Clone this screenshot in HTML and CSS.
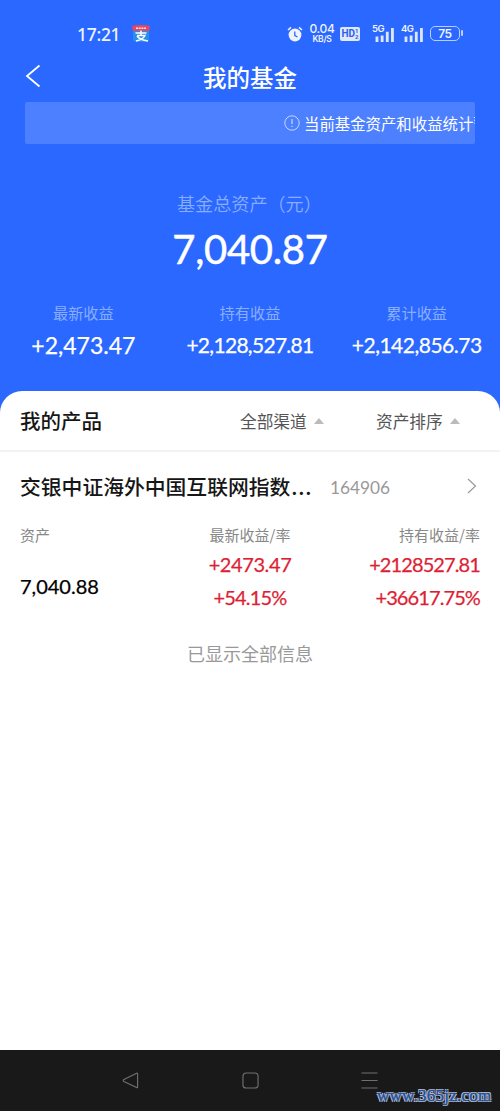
FILE: index.html
```html
<!DOCTYPE html>
<html lang="zh-CN">
<head>
<meta charset="utf-8">
<title>我的基金</title>
<link rel="stylesheet" href="styles.css">
</head>
<body>
<header class="hero">
  <div class="status">
    <span class="clock">17:21</span>
    <svg class="pay" viewBox="0 0 18 18"><path d="M1 5h16v9q0 3-3 3H4q-3 0-3-3z" fill="#268fed"/><path d="M0 1q9-2 18 0l-1 5H1z" fill="#e64862"/><path d="M4 3.2h10" stroke="#ffe6e8" stroke-width="1.6" stroke-dasharray="2 .7"/><path d="M3.500 8h11M9 5.500v5M5 10.500h8q-2 4-9 5.500M5 11q3 4 11 5" fill="none" stroke="#fff" stroke-width="1.5"/></svg>
    <svg class="alarm" viewBox="0 0 16 16"><circle cx="8" cy="9" r="6.400" fill="#eef3ff"/><path d="M1 4l3-2.600M15 4l-3-2.600" stroke="#eef3ff" stroke-width="1.500"/><path d="M7.800 5.500v4l2.700 1.500" fill="none" stroke="#2d68fb" stroke-width="1.300"/></svg>
    <span class="speed"><b>0.04</b><small>KB/S</small></span>
    <span class="hd"><b>HD</b><i>1<br>2</i></span>
    <span class="signal first"><b>5G</b><svg viewBox="0 0 22 16"><path d="M3.500 16v-6M9 16V9M14.500 16V5M20 16V1" stroke="#dce7ff" stroke-width="3"/></svg></span>
    <span class="signal"><b>4G</b><svg viewBox="0 0 22 16"><path d="M3.500 16v-6M9 16V9M14.500 16V5M20 16V1" stroke="#dce7ff" stroke-width="3"/></svg></span>
    <span class="battery">75</span>
  </div>
  <nav class="titlebar">
    <svg class="back" viewBox="0 0 16 24"><path d="M14.500 1.500L2 12l12.500 10.500" fill="none" stroke="#fff" stroke-width="1.800"/></svg>
    <h1>我的基金</h1>
  </nav>
  <div class="notice">
    <svg viewBox="0 0 16 16"><circle cx="8" cy="8" r="7.200" fill="none" stroke="#c6d6ff"/><path d="M8 4v5M8 10.800v1.300" stroke="#c6d6ff" stroke-width="1.200"/></svg>
    <span>当前基金资产和收益统计暂</span>
  </div>
  <div class="total-label">基金总资产（元）</div>
  <div class="total num">7,040.87</div>
  <div class="summary">
    <div><span>最新收益</span><strong class="num latest">+2,473.47</strong></div>
    <div><span>持有收益</span><strong class="num held">+2,128,527.81</strong></div>
    <div><span>累计收益</span><strong class="num accrued">+2,142,856.73</strong></div>
  </div>
</header>
<main class="sheet">
  <div class="toolbar">
    <h2>我的产品</h2>
    <span class="filter channel">全部渠道<i></i></span>
    <span class="filter">资产排序<i></i></span>
  </div>
  <section class="product">
    <div class="name-row">
      <h3>交银中证海外中国互联网指数<span class="dots">...</span></h3>
      <span class="code num">164906</span>
      <svg class="go" viewBox="0 0 10 16"><path d="M1 1l7.500 7L1 15" fill="none" stroke="#999" stroke-width="1.200"/></svg>
    </div>
    <div class="figures">
      <div class="asset"><span class="label">资产</span><span class="num amount">7,040.88</span></div>
      <div class="gain"><span class="label">最新收益/率</span><span class="num g1">+2473.47</span><span class="num g2">+54.15%</span></div>
      <div class="holding"><span class="label">持有收益/率</span><span class="num h1">+2128527.81</span><span class="num h2">+36617.75%</span></div>
    </div>
    <p class="end">已显示全部信息</p>
  </section>
</main>
<footer class="navbar">
  <svg viewBox="0 0 18 18"><path d="M16.500 2v14q0 1-1 .500L2 10q-1.500-1 0-2L15.500 1.300q1-.500 1 .700z"/></svg>
  <svg viewBox="0 0 18 18"><rect x="1" y="1" width="16" height="16" rx="3.500"/></svg>
  <svg viewBox="0 0 18 18"><path d="M.500 1h17M.500 9h17M.500 17h17"/></svg>
  <span class="watermark">www.365jz.com</span>
</footer>
</body>
</html>
```
FILE: styles.css
```css
* { box-sizing: border-box; }
body { margin: 0; width: 500px; height: 1111px; display: flex; flex-direction: column; overflow: hidden; background: #2a68ff; color: #161616; font-family: "Noto Sans CJK SC", sans-serif; }
h1, h2, h3, p { margin: 0; font-weight: 500; }
svg { display: block; flex: none; }
.num { font-family: Lato, sans-serif; font-weight: 400; -webkit-text-stroke: .25px currentColor; white-space: nowrap; }
.hero { height: 391px; color: #fff; }
.status { height: 52px; padding: 15px 0 0 77px; display: flex; align-items: center; font-family: Roboto, sans-serif; color: #eef3ff; }
.clock { width: 55px; font: 500 17.500px/24px "Noto Sans", sans-serif; letter-spacing: -.3px; }
.pay { width: 18px; height: 18px; }
.alarm { width: 16px; height: 16px; margin-left: 137px; }
.speed { width: 26px; margin-left: 6px; display: flex; flex-direction: column; align-items: center; }
.speed b { font: 500 12px/12px Inter, sans-serif; letter-spacing: -.3px; }
.speed small { font: 600 8.500px/9px Inter, sans-serif; letter-spacing: -.3px; }
.hd { width: 20px; height: 14px; margin-left: 5px; display: flex; align-items: center; justify-content: center; border-radius: 2px; background: #dfe8ff; color: #2b62ed; }
.hd b { font: 700 10px/14px Roboto, sans-serif; }
.hd i { font: 700 6px/6px Roboto, sans-serif; }
.signal { position: relative; width: 22px; height: 20px; margin-left: 7px; padding-top: 3px; }
.signal.first { margin-left: 13px; }
.signal svg { width: 22px; height: 15px; }
.signal b { position: absolute; left: -1px; top: 0; padding-right: 1px; background: #2a68ff; font: 600 9.500px/10px Inter, sans-serif; letter-spacing: -.5px; }
.battery { position: relative; width: 30px; height: 15px; margin-left: 6px; border: 1.500px solid #b9ceff; border-radius: 5px; text-align: center; font: 600 12px/13px Inter, sans-serif; letter-spacing: -.3px; }
.battery::after { content: ""; position: absolute; right: -4px; top: 3px; width: 2px; height: 6px; border-radius: 1px; background: #b9ceff; }
.titlebar { height: 50px; display: grid; grid-template-columns: 40px 1fr 40px; align-items: center; }
.back { width: 16px; height: 24px; margin: -2px 0 0 25px; }
h1 { text-align: center; font-size: 23.500px; line-height: 50px; }
.notice { height: 42px; margin: 0 25px; padding-left: 259px; display: flex; align-items: center; gap: 5px; overflow: hidden; border-radius: 2px; background: #4d80ff; font-size: 15.400px; white-space: nowrap; }
.notice span { margin-left: -1px; }
.notice svg { width: 16px; height: 16px; }
.total-label { margin-top: 43px; height: 32px; padding-left: 177px; font-size: 18.100px; line-height: 32px; font-weight: 350; color: #8aaeff; white-space: nowrap; }
.total { height: 60px; text-align: center; font-size: 40px; line-height: 60px; letter-spacing: -.3px; -webkit-text-stroke-width: .5px; }
.summary { margin-top: 17px; display: grid; grid-template-columns: repeat(3, 1fr); text-align: center; }
.summary span { display: block; font-size: 15.200px; line-height: 32px; color: #8aaeff; }
.summary strong { display: block; font-size: 21px; line-height: 34px; }
.summary .latest { font-size: 23px; }
.summary .held { letter-spacing: -.7px; }
.summary .accrued { letter-spacing: -.5px; }
.sheet { height: 659px; background: #fff; border-radius: 22px 22px 0 0; }
.toolbar { height: 61px; padding: 0 40px 0 20px; display: flex; align-items: center; border-bottom: 2px solid #f3f3f3; }
h2 { width: 220px; margin-top: -2px; font-size: 20.500px; }
.filter { display: flex; align-items: center; gap: 7px; font-size: 16.700px; color: #555; }
.filter i { border: 5px solid transparent; border-top: 0; border-bottom: 6px solid #bbb; }
.channel { width: 136px; }
.product { padding: 0 20px; }
.name-row { height: 70px; display: flex; align-items: center; }
h3 { width: 310px; margin-top: -3px; font-size: 20.800px; white-space: nowrap; }
.dots { margin-left: 1px; letter-spacing: .8px; }
.code { width: 137px; padding-top: 1px; font-size: 17.300px; color: #999; -webkit-text-stroke-width: 0; }
.go { width: 10px; height: 16px; margin-top: -2px; }
.figures { display: flex; justify-content: space-between; }
.figures > div { display: flex; flex-direction: column; font-size: 20px; line-height: 33px; }
.figures .label { height: 26px; font-size: 15px; line-height: 26px; color: #888; }
.asset { width: 170px; }
.figures .amount { margin-top: 20px; line-height: 36px; color: #000; }
.gain { width: 120px; align-items: center; color: #dd1f36; }
.holding { width: 170px; align-items: flex-end; color: #dd1f36; }
.g1 { letter-spacing: -.4px; }
.g2 { letter-spacing: -.8px; }
.h1 { letter-spacing: -.9px; }
.h2 { letter-spacing: -.9px; }
.end { margin-top: 23px; text-align: center; font-size: 18px; font-weight: 400; line-height: 32px; color: #999; }
.navbar { position: relative; height: 61px; padding: 0 122px; display: flex; align-items: center; justify-content: space-between; background: #191919; }
.navbar svg { width: 17px; height: 17px; fill: none; stroke: #707070; stroke-width: 1.200; }
.watermark { position: absolute; left: 377px; bottom: 5px; font: 400 17px/20px "Liberation Serif", serif; letter-spacing: .25px; color: #244f9b; -webkit-text-stroke: .4px #244f9b; text-shadow: -1px -1px #b4bdcb, 1px 1px #b4bdcb, 1px -1px #b4bdcb, -1px 1px #b4bdcb; }
```
